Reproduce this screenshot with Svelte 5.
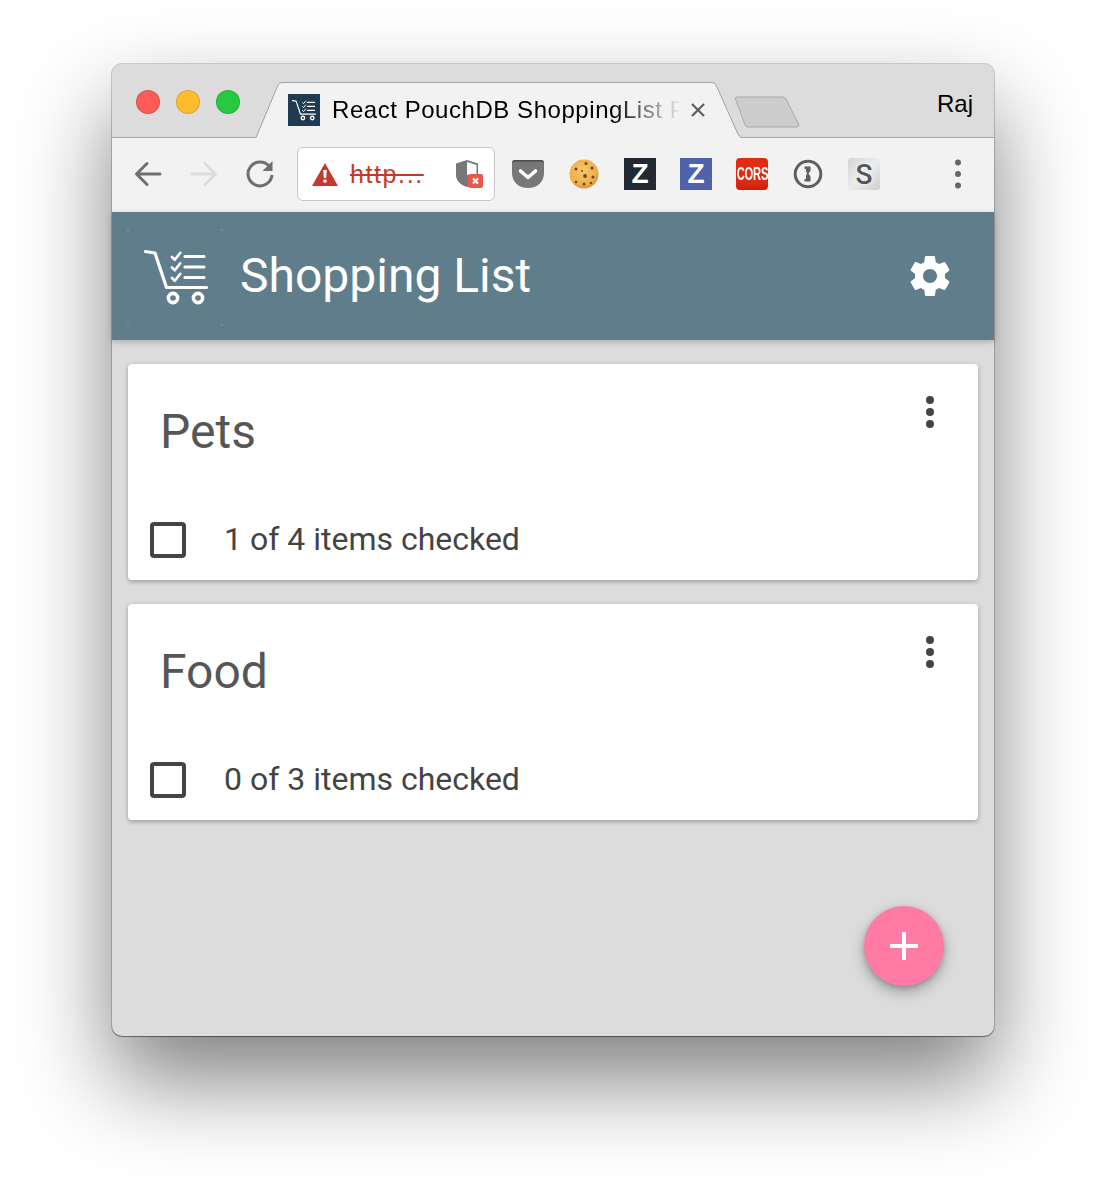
<script>
  // Shopping list PWA shown inside a macOS Chrome window.
  const lists = [
    { name: 'Pets', checked: 1, total: 4 },
    { name: 'Food', checked: 0, total: 3 }
  ];
</script>

{#snippet cart(stroke)}
  <g fill="none" stroke={stroke} stroke-linecap="round" stroke-linejoin="round">
    <path d="M1.500 1.500 L11 3 L22.500 37.500 H62.500" stroke-width="3.200" />
    <path d="M28 7 l2.800 2.800 l5.500 -7 M28 17.500 l2.800 2.800 l5.500 -7 M28 28 l2.800 2.800 l5.500 -7" stroke-width="2.600" />
    <path d="M41 6.500 H60 M41 17 H60 M41 27.500 H60" stroke-width="3.200" />
    <circle cx="29" cy="48" r="4.600" stroke-width="3.600" />
    <circle cx="54" cy="48" r="4.600" stroke-width="3.600" />
  </g>
{/snippet}

<div class="page">
  <div class="window">
    <div class="tabstrip">
      <div class="lights">
        <span class="light red"></span>
        <span class="light yellow"></span>
        <span class="light green"></span>
      </div>
      <div class="tab">
        <svg class="tab-shape" width="484" height="56" viewBox="0 0 484 56">
          <path d="M0 56 L22 3 Q23 1 26 1 H456 Q459 1 460 3 L482 53 Q483 55 484 55 V56 Z" fill="#f2f2f2" />
          <path d="M0 55.500 L22 3 Q23 .5 26 .5 H456 Q459 .5 460 3 L482 52 Q483 55 486 55" fill="none" stroke="#a3a3a3" />
        </svg>
        <span class="favicon">
          <svg width="24" height="21" viewBox="0 0 64 56">{@render cart('#fff')}</svg>
        </span>
        <span class="tab-title">React PouchDB ShoppingList PWA</span>
        <svg class="tab-close" width="16" height="16" viewBox="0 0 16 16">
          <path d="M2 2 L14 14 M14 2 L2 14" stroke="#5f5f5f" stroke-width="2.200" />
        </svg>
      </div>
      <svg class="newtab" width="66" height="32" viewBox="0 0 66 32">
        <path d="M1.500 3 Q1 1 3 1 H49 Q51 1 52 3 L64.500 28 Q65.500 31 63 31 H14 Q12 31 11 29 Z" fill="#cdcdcd" stroke="#a9a9a9" />
      </svg>
      <span class="profile">Raj</span>
    </div>

    <div class="toolbar">
      <button class="nav" aria-label="Back">
        <svg width="32" height="32" viewBox="0 0 32 32">
          <path d="M28 16 H5 M15 5.500 L4.500 16 L15 26.500" fill="none" stroke="#6f6f6f" stroke-width="3" stroke-linecap="round" stroke-linejoin="round" />
        </svg>
      </button>
      <button class="nav" aria-label="Forward">
        <svg width="32" height="32" viewBox="0 0 32 32">
          <path d="M4 16 H27 M17 5.500 L27.500 16 L17 26.500" fill="none" stroke="#dcdcdc" stroke-width="3" stroke-linecap="round" stroke-linejoin="round" />
        </svg>
      </button>
      <button class="nav" aria-label="Reload">
        <svg width="32" height="32" viewBox="0 0 32 32">
          <path d="M25.500 8.500 A12 12 0 1 0 28 17" fill="none" stroke="#6f6f6f" stroke-width="3" />
          <path d="M28.500 3 V13 H18.500 Z" fill="#6f6f6f" />
        </svg>
      </button>

      <div class="omnibox">
        <svg width="26" height="23" viewBox="0 0 26 23">
          <path d="M13 0 L26 23 H0 Z" fill="#c5392a" />
          <path d="M11.200 7 H14.800 L14.200 15 H11.800 Z M11.400 16.500 H14.600 V19.500 H11.400 Z" fill="#fff" />
        </svg>
        <span class="url">http...</span>
        <svg class="shield" width="28" height="30" viewBox="0 0 28 30">
          <path d="M11 1 L22 4.500 V16 C22 22 17 26 11 28 C5 26 0 22 0 16 V4.500 Z" fill="#777" />
          <path d="M11 3 L20.500 6 V16 H11 Z" fill="#fff" />
          <rect x="12" y="15" width="15" height="14" rx="2" fill="#e9584c" />
          <path d="M17 19.500 L22 24.500 M22 19.500 L17 24.500" stroke="#fff" stroke-width="2" />
        </svg>
      </div>

      <div class="extensions">
        <svg class="ext" width="32" height="32" viewBox="0 0 32 32">
          <path d="M0 5 Q0 2 3 2 H29 Q32 2 32 5 V15 C32 24 25 30 16 30 C7 30 0 24 0 15 Z" fill="#777" />
          <path d="M0 5 Q0 2 3 2 H29 Q32 2 32 5 V6 Q32 3.500 29 3.500 H3 Q0 3.500 0 6 Z" fill="#4a4a4a" />
          <path d="M8.500 13 L16 19.500 L23.500 13" fill="none" stroke="#fff" stroke-width="3.600" stroke-linecap="round" stroke-linejoin="round" />
        </svg>
        <svg class="ext" width="32" height="32" viewBox="0 0 32 32">
          <defs>
            <radialGradient id="cookie" cx="0.45" cy="0.4" r="0.62">
              <stop offset="0%" stop-color="#f6c768" />
              <stop offset="75%" stop-color="#eeb04a" />
              <stop offset="100%" stop-color="#d98f3a" />
            </radialGradient>
          </defs>
          <circle cx="16" cy="16" r="14.500" fill="url(#cookie)" />
          <g fill="#6b4423">
            <circle cx="8" cy="11" r="1.500" /><circle cx="18" cy="5.500" r="1.500" />
            <circle cx="24" cy="10" r="1.600" /><circle cx="14" cy="13" r="1" />
            <circle cx="17" cy="18" r="1.900" /><circle cx="25" cy="19" r="1.500" />
            <circle cx="8" cy="24" r="1.300" /><circle cx="16" cy="26" r="1.500" /><circle cx="23" cy="25" r="1.200" />
          </g>
        </svg>
        <span class="ext ext-z dark">Z</span>
        <span class="ext ext-z blue">Z</span>
        <span class="ext ext-cors"><span>CORS</span></span>
        <svg class="ext" width="32" height="32" viewBox="0 0 32 32">
          <circle cx="16" cy="16" r="12.800" fill="#f2f2f2" stroke="#5f5f5f" stroke-width="3" />
          <path d="M12.500 8.500 H18.500 V13 L16.500 15.500 L18.500 18.500 V23.500 H12.500 V21 H14 V18 L15 15.500 L14 13 V11 H12.500 Z" fill="#5f5f5f" />
        </svg>
        <span class="ext ext-s">S</span>
      </div>

      <svg class="menu" width="8" height="32" viewBox="0 0 8 32">
        <circle cx="4" cy="4.500" r="3" fill="#666" />
        <circle cx="4" cy="16" r="3" fill="#666" />
        <circle cx="4" cy="27.500" r="3" fill="#666" />
      </svg>
    </div>

    <header class="appbar">
      <svg class="logo" width="64" height="56" viewBox="0 0 64 56">
        {@render cart('#fff')}
        <g fill="#fff" opacity="0.35">
          <circle cx="-16" cy="-20" r="0.700" /><circle cx="78" cy="-20" r="0.700" />
          <circle cx="-16" cy="75" r="0.700" /><circle cx="78" cy="75" r="0.700" />
        </g>
      </svg>
      <h1>Shopping List</h1>
      <svg class="gear" width="48" height="48" viewBox="0 0 24 24">
        <path fill="#fff" d="M19.430 12.980c.040-.320.070-.640.070-.980s-.030-.660-.070-.980l2.110-1.650c.190-.150.240-.420.120-.640l-2-3.460c-.120-.220-.390-.300-.610-.220l-2.490 1c-.520-.400-1.080-.730-1.690-.980l-.380-2.650C14.460 2.180 14.250 2 14 2h-4c-.250 0-.460.180-.490.420l-.380 2.650c-.610.250-1.170.590-1.690.980l-2.490-1c-.230-.090-.490 0-.610.220l-2 3.460c-.130.220-.070.490.120.640l2.110 1.650c-.040.320-.070.650-.070.980s.030.660.070.980l-2.110 1.650c-.190.150-.240.420-.120.640l2 3.460c.120.220.390.300.610.220l2.490-1c.520.400 1.080.730 1.690.980l.380 2.650c.030.240.240.420.490.420h4c.250 0 .460-.180.490-.420l.380-2.650c.610-.250 1.170-.590 1.690-.980l2.490 1c.230.090.490 0 .610-.220l2-3.460c.120-.220.070-.490-.120-.640l-2.110-1.650zM12 15.500c-1.930 0-3.500-1.570-3.500-3.500s1.570-3.500 3.500-3.500 3.500 1.570 3.500 3.500-1.570 3.500-3.500 3.500z" />
      </svg>
    </header>

    <main class="content">
      {#each lists as list}
        <section class="card">
          <div class="card-head">
            <h2>{list.name}</h2>
            <svg class="more" width="48" height="48" viewBox="0 0 48 48">
              <circle cx="24" cy="12" r="4" fill="#444" />
              <circle cx="24" cy="24" r="4" fill="#444" />
              <circle cx="24" cy="36" r="4" fill="#444" />
            </svg>
          </div>
          <div class="card-row">
            <span class="checkbox"></span>
            <span class="count">{list.checked} of {list.total} items checked</span>
          </div>
        </section>
      {/each}
    </main>

    <button class="fab" aria-label="Add list">
      <svg width="28" height="28" viewBox="0 0 28 28">
        <path d="M14 0 V28 M0 14 H28" stroke="#fff" stroke-width="4" />
      </svg>
    </button>
  </div>
</div>

<style>
  :global(body) {
    margin: 0;
    background: #fff;
  }

  .page {
    padding: 64px 112px 160px;
    font-family: Roboto, sans-serif;
  }

  .window {
    position: relative;
    width: 882px;
    height: 972px;
    border-radius: 10px;
    background: #dcdcdc;
    box-shadow:
      0 0 0 1px rgba(0, 0, 0, 0.16),
      0 1px 1px rgba(0, 0, 0, 0.35),
      0 44px 90px rgba(0, 0, 0, 0.5);
  }

  .tabstrip {
    display: flex;
    align-items: flex-end;
    box-sizing: border-box;
    height: 74px;
    background: #dcdcdc;
    border-bottom: 1px solid #a9a9a9;
    border-radius: 10px 10px 0 0;
  }

  .lights {
    display: flex;
    gap: 16px;
    align-self: flex-start;
    padding: 26px 0 0 24px;
  }

  .light {
    width: 24px;
    height: 24px;
    box-sizing: border-box;
    border-radius: 50%;
    border: 1px solid rgba(0, 0, 0, 0.12);
  }

  .red { background: #fc5b57; }
  .yellow { background: #fdbc2c; }
  .green { background: #28c840; }

  .tab {
    position: relative;
    display: flex;
    align-items: center;
    box-sizing: border-box;
    width: 484px;
    height: 56px;
    margin: 0 -6px -1px 16px;
    padding: 0 34px 0 32px;
  }

  .tab-shape {
    position: absolute;
    left: 0;
    top: 0;
  }

  .favicon {
    position: relative;
    display: flex;
    align-items: center;
    justify-content: center;
    flex: none;
    width: 32px;
    height: 32px;
    background: #203a52;
  }

  .tab-title {
    position: relative;
    flex: 1;
    min-width: 0;
    margin: 0 8px 0 12px;
    overflow: hidden;
    white-space: nowrap;
    font-family: "Liberation Sans", sans-serif;
    font-size: 24px;
    line-height: 32px;
    letter-spacing: 0.55px;
    color: #000;
    -webkit-mask-image: linear-gradient(to right, #000 80%, transparent 100%);
    mask-image: linear-gradient(to right, #000 80%, transparent 100%);
  }

  .tab-close {
    position: relative;
    flex: none;
  }

  .newtab {
    flex: none;
    margin-bottom: 9px;
  }

  .profile {
    align-self: flex-start;
    margin: 26px 21px 0 auto;
    font-family: "Liberation Sans", sans-serif;
    font-size: 24px;
    line-height: 28px;
    color: #000;
  }

  .toolbar {
    display: flex;
    align-items: center;
    box-sizing: border-box;
    height: 74px;
    padding: 0 0 2px 8px;
    background: #f2f2f2;
  }

  .nav {
    display: flex;
    align-items: center;
    justify-content: center;
    flex: none;
    width: 56px;
    height: 56px;
    padding: 0;
    border: 0;
    background: none;
  }

  .omnibox {
    display: flex;
    align-items: center;
    box-sizing: border-box;
    width: 198px;
    height: 54px;
    margin-left: 9px;
    padding: 0 10px 0 14px;
    background: #fff;
    border: 1px solid #c6c6c6;
    border-radius: 6px;
  }

  .url {
    margin-left: 12px;
    font-family: "Liberation Sans", sans-serif;
    font-size: 25px;
    letter-spacing: 1.6px;
    color: #c5392a;
    text-decoration: line-through;
  }

  .shield {
    margin-left: auto;
  }

  .extensions {
    display: flex;
    align-items: center;
    gap: 24px;
    margin-left: 17px;
  }

  .ext {
    display: flex;
    align-items: center;
    justify-content: center;
    flex: none;
    width: 32px;
    height: 32px;
  }

  .ext-z {
    font-family: "Liberation Sans", sans-serif;
    font-size: 28px;
    font-weight: 700;
    color: #fff;
  }

  .dark { background: #232933; }
  .blue { background: #4f62ab; }

  .ext-cors {
    background: linear-gradient(#e22c12 70%, #c8200c);
    border-radius: 4px;
    font-family: "Liberation Sans", sans-serif;
    font-size: 18px;
    font-weight: 700;
    color: #fff;
  }

  .ext-cors span {
    transform: scaleX(0.62);
    white-space: nowrap;
    letter-spacing: -0.3px;
  }

  .ext-s {
    background: linear-gradient(135deg, #d4d4d4, #ececec 50%, #cfcfcf);
    border-radius: 3px;
    font-size: 28px;
    font-weight: 500;
    color: #555;
    text-shadow: 0 0 3px #fff;
  }

  .menu {
    flex: none;
    margin-left: 74px;
  }

  .appbar {
    position: relative;
    display: flex;
    align-items: center;
    height: 128px;
    padding: 0 40px 0 32px;
    background: #607d8b;
    box-shadow: 0 2px 6px rgba(0, 0, 0, 0.22);
  }

  .logo {
    flex: none;
    margin-top: 4px;
    overflow: visible;
  }

  .appbar h1 {
    flex: 1;
    margin: 0 0 0 32px;
    font-size: 48px;
    font-weight: 400;
    line-height: 56px;
    color: #fff;
  }

  .gear {
    flex: none;
  }

  .content {
    display: flex;
    flex-direction: column;
    gap: 24px;
    padding: 24px 16px;
  }

  .card {
    box-sizing: border-box;
    height: 216px;
    padding: 24px 24px 0 22px;
    background: #fff;
    border-radius: 4px;
    box-shadow: 0 2px 4px rgba(0, 0, 0, 0.2), 0 1px 6px rgba(0, 0, 0, 0.1);
  }

  .card-head {
    display: flex;
    justify-content: space-between;
  }

  .card-head h2 {
    margin: 20px 0 0 10px;
    font-size: 48px;
    font-weight: 400;
    line-height: 48px;
    color: #565656;
  }

  .more {
    flex: none;
  }

  .card-row {
    display: flex;
    align-items: center;
    height: 48px;
    margin-top: 60px;
  }

  .checkbox {
    flex: none;
    box-sizing: border-box;
    width: 36px;
    height: 36px;
    border: 4px solid #444;
    border-radius: 4px;
  }

  .count {
    margin: -2px 0 0 38px;
    font-size: 32px;
    line-height: 48px;
    color: #444;
  }

  .fab {
    position: absolute;
    right: 50px;
    bottom: 50px;
    display: flex;
    align-items: center;
    justify-content: center;
    width: 80px;
    height: 80px;
    padding: 0;
    border: 0;
    border-radius: 50%;
    background: #ff7ba6;
    box-shadow: 0 6px 14px rgba(0, 0, 0, 0.28), 0 2px 5px rgba(0, 0, 0, 0.16);
  }
</style>
